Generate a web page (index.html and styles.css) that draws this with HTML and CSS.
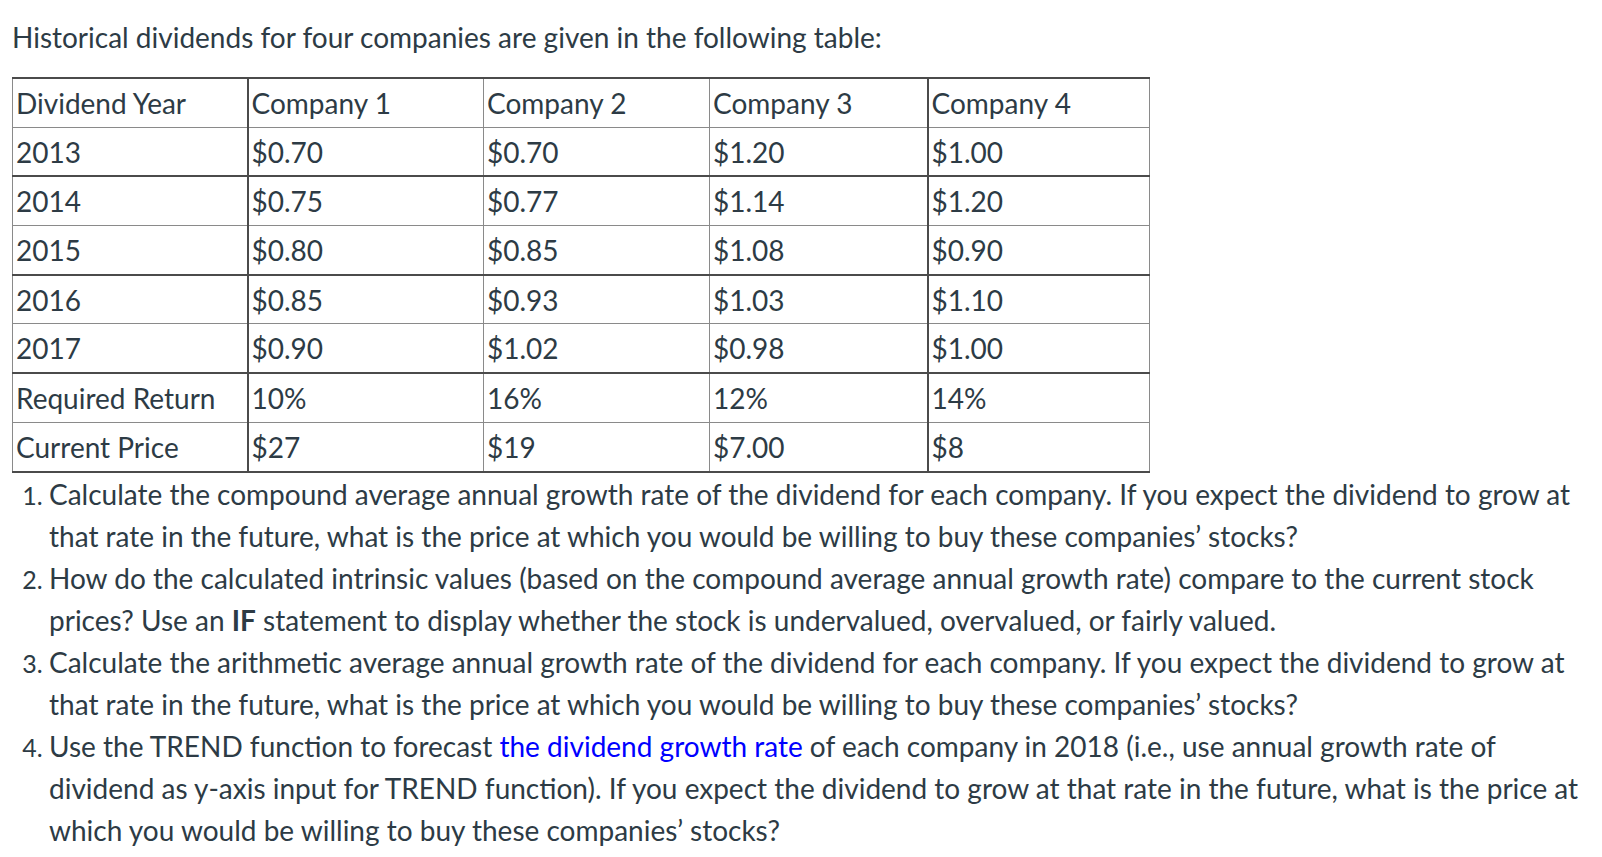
FILE: index.html
```html
<!DOCTYPE html>
<html lang="en">
<head>
<meta charset="utf-8">
<title>Historical dividends</title>
<link rel="stylesheet" href="styles.css">
</head>
<body>
<div class="page">
  <p class="intro">Historical dividends for four companies are given in the following table:</p>
  <table class="divs">
    <colgroup>
      <col class="c0"><col class="c1"><col class="c2"><col class="c3"><col class="c4">
    </colgroup>
    <tbody>
      <tr><td>Dividend Year</td><td>Company 1</td><td>Company 2</td><td>Company 3</td><td>Company 4</td></tr>
      <tr class="dk"><td>2013</td><td>$0.70</td><td>$0.70</td><td>$1.20</td><td>$1.00</td></tr>
      <tr><td>2014</td><td>$0.75</td><td>$0.77</td><td>$1.14</td><td>$1.20</td></tr>
      <tr class="dk"><td>2015</td><td>$0.80</td><td>$0.85</td><td>$1.08</td><td>$0.90</td></tr>
      <tr><td>2016</td><td>$0.85</td><td>$0.93</td><td>$1.03</td><td>$1.10</td></tr>
      <tr class="dk"><td>2017</td><td>$0.90</td><td>$1.02</td><td>$0.98</td><td>$1.00</td></tr>
      <tr><td>Required Return</td><td>10%</td><td>16%</td><td>12%</td><td>14%</td></tr>
      <tr class="dk last"><td>Current Price</td><td>$27</td><td>$19</td><td>$7.00</td><td>$8</td></tr>
    </tbody>
  </table>
  <ol class="tasks">
    <li>Calculate the compound average annual growth rate of the dividend for each company. If you expect the dividend to grow at that rate in the future, what is the price at which you would be willing to buy these companies’ stocks?</li>
    <li>How do the calculated intrinsic values (based on the compound average annual growth rate) compare to the current stock prices? Use an <strong>IF</strong> statement to display whether the stock is undervalued, overvalued, or fairly valued.</li>
    <li>Calculate the arithmetic average annual growth rate of the dividend for each company. If you expect the dividend to grow at that rate in the future, what is the price at which you would be willing to buy these companies’ stocks?</li>
    <li>Use the TREND function to forecast <span class="hl">the dividend growth rate</span> of each company in 2018 (i.e., use annual growth rate of dividend as y-axis input for TREND function). If you expect the dividend to grow at that rate in the future, what is the price at which you would be willing to buy these companies’ stocks?</li>
  </ol>
</div>
</body>
</html>
```

FILE: styles.css
```css
html, body {
  margin: 0;
  padding: 0;
  background: #ffffff;
}

body {
  font-family: Lato, "Open Sans", "Liberation Sans", sans-serif;
  font-size: 28px;
  color: #2d3b45;
}

.page {
  padding: 16px 10px 0 12px;
  width: 1602px;
  box-sizing: border-box;
}

.intro {
  margin: 0 0 19px 0;
  line-height: 42px;
}

.divs {
  border-collapse: collapse;
  table-layout: fixed;
  width: 1137px;
  border-top: 2px solid #4b4b4b;
  border-bottom: 2px solid #4b4b4b;
  border-left: 1px solid #8a8a8a;
  border-right: 1px solid #8a8a8a;
}

.c0 { width: 235px; }
.c1 { width: 236px; }
.c2 { width: 226px; }
.c3 { width: 218px; }
.c4 { width: 222px; }

.divs td {
  height: 47.7px;
  padding: 0 3px;
  border: 1px solid #8a8a8a;
  line-height: 34px;
  vertical-align: middle;
  white-space: nowrap;
}

.divs tr:first-child td {
  border-top: 2px solid #4b4b4b;
}

.divs td:nth-child(2),
.divs td:nth-child(5) {
  border-left: 2px solid #4b4b4b;
}

.divs tr.dk td {
  border-bottom: 2px solid #4b4b4b;
}

.tasks {
  margin: 0;
  padding: 0 0 0 37px;
  line-height: 42px;
}

.tasks li::marker {
  font-size: 25px;
}

.tasks strong {
  font-weight: 700;
}

.hl {
  color: #0000ff;
}
```
